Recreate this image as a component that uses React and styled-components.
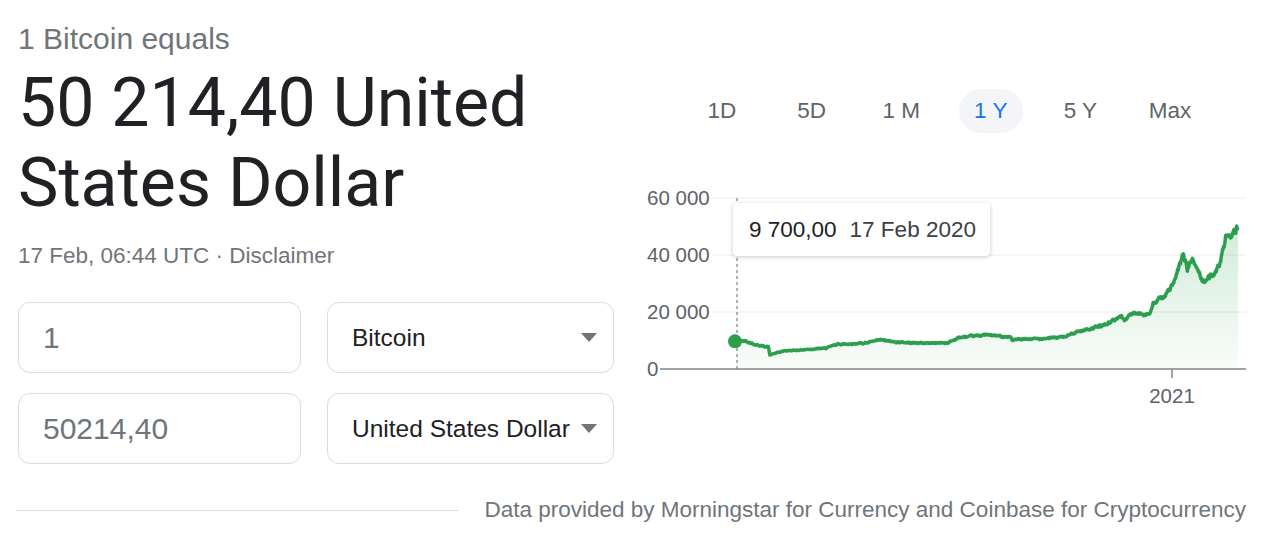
import React from 'react';
import styled, { createGlobalStyle } from 'styled-components';

const GlobalStyle = createGlobalStyle`
  body {
    margin: 0;
    background: #fff;
    font-family: "Liberation Sans", Arial, sans-serif;
  }
`;

// rough btc price anchors, day 0 = 17 Feb 2020
const ANCHORS = [
  [0, 9700], [6, 9900], [13, 8600], [20, 7900], [23, 7800], [24, 4900], [27, 5400],
  [35, 6400], [44, 6600], [55, 7000], [65, 7300], [73, 8700], [83, 8800], [95, 9200],
  [105, 10200], [115, 9500], [134, 9100], [154, 9200], [162, 11000], [182, 12000],
  [200, 11200], [201, 10200], [226, 10800], [240, 11300], [247, 12900], [262, 14600],
  [270, 15800], [281, 18600], [283, 17000], [288, 19300], [302, 19400], [304, 22800],
  [314, 26500], [320, 31000], [326, 40500], [329, 35000], [332, 38500], [336, 35500],
  [340, 31000], [344, 31500], [346, 33000], [350, 33500], [354, 39000], [357, 46000],
  [359, 45000], [363, 48700], [366, 49500],
];

const W_DAYS = 366;
const X0 = 97;
const X1 = 598;
const Y0 = 189;
const PX_PER_USD = 171 / 60000;

const seeded = seed => () => {
  seed |= 0;
  seed = (seed + 0x6d2b79f5) | 0;
  let t = Math.imul(seed ^ (seed >>> 15), 1 | seed);
  t = (t + Math.imul(t ^ (t >>> 7), 61 | t)) ^ t;
  return ((t ^ (t >>> 14)) >>> 0) / 4294967296;
};

const buildPoints = () => {
  const rand = seeded(42);
  const pts = [];
  let walk = 0;
  for (let s = 0; s <= W_DAYS * 3; s++) {
    const d = s / 3;
    let i = 0;
    while (i < ANCHORS.length - 2 && ANCHORS[i + 1][0] < d) i++;
    const [da, pa] = ANCHORS[i];
    const [db, pb] = ANCHORS[i + 1];
    const t = Math.min(1, Math.max(0, (d - da) / (db - da)));
    let price = pa + (pb - pa) * t;
    walk = walk * 0.6 + (rand() - 0.5) * 0.04;
    if (s > 0 && s < W_DAYS * 3) price *= 1 + walk;
    const x = X0 + (d / W_DAYS) * (X1 - X0);
    const y = Y0 - price * PX_PER_USD;
    pts.push([x, y]);
  }
  return pts;
};

const POINTS = buildPoints();
const LINE = POINTS.map(([x, y], i) => `${i ? 'L' : 'M'}${x.toFixed(1)} ${y.toFixed(1)}`).join(' ');
const AREA = `${LINE} L${X1} ${Y0} L${X0} ${Y0} Z`;

const Shell = styled.div`
  position: relative;
  height: 557px;
`;

const Page = styled.div`
  display: flex;
  padding: 21px 0 0 18px;
  width: 1280px;
  box-sizing: border-box;
`;

const LeftCol = styled.div`
  width: 596px;
  display: flex;
  flex-direction: column;
`;

const RightCol = styled.div`
  margin-left: 26px;
  width: 616px;
  display: flex;
  flex-direction: column;
`;

const Equals = styled.div`
  font-size: 30px;
  line-height: 36px;
  color: #70757a;
`;

const Headline = styled.div`
  font-family: Roboto, "Open Sans", sans-serif;
  font-size: 68px;
  line-height: 80px;
  color: #202124;
  margin-top: 6px;
`;

const Meta = styled.div`
  font-size: 22.5px;
  line-height: 28px;
  color: #70757a;
  margin-top: 19px;
`;

const Converter = styled.div`
  display: grid;
  grid-template-columns: 283px 287px;
  grid-auto-rows: 71px;
  column-gap: 26px;
  row-gap: 20px;
  margin-top: 32px;
`;

const Field = styled.div`
  border: 1px solid #dadce0;
  border-radius: 12px;
  display: flex;
  align-items: center;
  justify-content: space-between;
  padding: 0 16px 0 24px;
  font-size: ${p => (p.select ? '24.5px' : '30px')};
  color: ${p => (p.select ? '#202124' : '#70757a')};
`;

const Caret = styled.span`
  width: 0;
  height: 0;
  border-left: 8px solid transparent;
  border-right: 8px solid transparent;
  border-top: 9px solid #70757a;
`;

const Tabs = styled.div`
  display: flex;
  gap: 25.6px;
  margin: 68px 0 0 50px;
`;

const Tab = styled.div`
  width: 64px;
  height: 44px;
  border-radius: 22px;
  display: flex;
  align-items: center;
  justify-content: center;
  font-size: 22.5px;
  color: ${p => (p.active ? '#1a73e8' : '#5f6368')};
  background: ${p => (p.active ? '#f3f5f8' : 'transparent')};
`;

const ChartBox = styled.div`
  position: relative;
  margin-top: 47px;
  width: 610px;
  height: 230px;
`;

const Tooltip = styled.div`
  position: absolute;
  left: 93px;
  top: 23px;
  width: 257px;
  height: 53px;
  background: #fff;
  border-radius: 4px;
  box-shadow: 0 1px 4px rgba(0, 0, 0, 0.22);
  display: flex;
  align-items: center;
  gap: 13px;
  padding-left: 16px;
  box-sizing: border-box;
  font-size: 22.5px;
`;

const TipValue = styled.span`
  color: #202124;
`;

const TipDate = styled.span`
  color: #3c4043;
`;

const Footer = styled.div`
  position: absolute;
  left: 16px;
  right: 34px;
  top: 496px;
  display: flex;
  align-items: center;
  gap: 26px;
`;

const Rule = styled.div`
  flex: 1;
  height: 1px;
  background: #dadce0;
`;

const Source = styled.div`
  font-size: 22.5px;
  line-height: 28px;
  color: #70757a;
  white-space: nowrap;
`;

const GRID = [
  { label: '60 000', v: 60000 },
  { label: '40 000', v: 40000 },
  { label: '20 000', v: 20000 },
];

const AXIS_FONT = 'Liberation Sans, Arial, sans-serif';

const Chart = () => (
  <svg width="610" height="230" viewBox="0 0 610 230">
    <defs>
      <linearGradient id="fill" x1="0" y1="0" x2="0" y2="1">
        <stop offset="0" stopColor="#34a853" stopOpacity="0.22" />
        <stop offset="1" stopColor="#34a853" stopOpacity="0.03" />
      </linearGradient>
    </defs>
    {GRID.map(g => {
      const y = Y0 - g.v * PX_PER_USD;
      return (
        <g key={g.v}>
          <line x1="72" x2="606" y1={y} y2={y} stroke="#ececec" strokeWidth="1" />
          <text x="7" y={y + 7} fontSize="20.5" fill="#5f6368" fontFamily={AXIS_FONT}>
            {g.label}
          </text>
        </g>
      );
    })}
    <text x="7" y={Y0 + 7} fontSize="20.5" fill="#5f6368" fontFamily={AXIS_FONT}>0</text>
    <path d={AREA} fill="url(#fill)" />
    <line x1={X0} x2={X0} y1="18" y2={Y0} stroke="#5f6368" strokeWidth="1" strokeDasharray="3 3" />
    <path d={LINE} fill="none" stroke="#2b9f4e" strokeWidth="3.5" strokeLinejoin="round" />
    <line x1="20" x2="606" y1={Y0} y2={Y0} stroke="#80868b" strokeWidth="1.5" />
    <line x1="532" x2="532" y1={Y0} y2={Y0 + 9} stroke="#80868b" strokeWidth="1.5" />
    <text x="532" y={Y0 + 34} textAnchor="middle" fontSize="20.5" fill="#5f6368" fontFamily={AXIS_FONT}>
      2021
    </text>
    <circle cx="95" cy={Y0 - 9700 * PX_PER_USD} r="7" fill="#2b9f4e" />
  </svg>
);

const TABS = ['1D', '5D', '1 M', '1 Y', '5 Y', 'Max'];

export default function App() {
  return (
    <Shell>
      <GlobalStyle />
      <Page>
        <LeftCol>
          <Equals>1 Bitcoin equals</Equals>
          <Headline>
            50 214,40 United
            <br />
            States Dollar
          </Headline>
          <Meta>17 Feb, 06:44 UTC · Disclaimer</Meta>
          <Converter>
            <Field>1</Field>
            <Field select>
              Bitcoin
              <Caret />
            </Field>
            <Field>50214,40</Field>
            <Field select>
              United States Dollar
              <Caret />
            </Field>
          </Converter>
        </LeftCol>
        <RightCol>
          <Tabs>
            {TABS.map(t => (
              <Tab key={t} active={t === '1 Y'}>{t}</Tab>
            ))}
          </Tabs>
          <ChartBox>
            <Chart />
            <Tooltip>
              <TipValue>9 700,00</TipValue>
              <TipDate>17 Feb 2020</TipDate>
            </Tooltip>
          </ChartBox>
        </RightCol>
      </Page>
      <Footer>
        <Rule />
        <Source>Data provided by Morningstar for Currency and Coinbase for Cryptocurrency</Source>
      </Footer>
    </Shell>
  );
}
